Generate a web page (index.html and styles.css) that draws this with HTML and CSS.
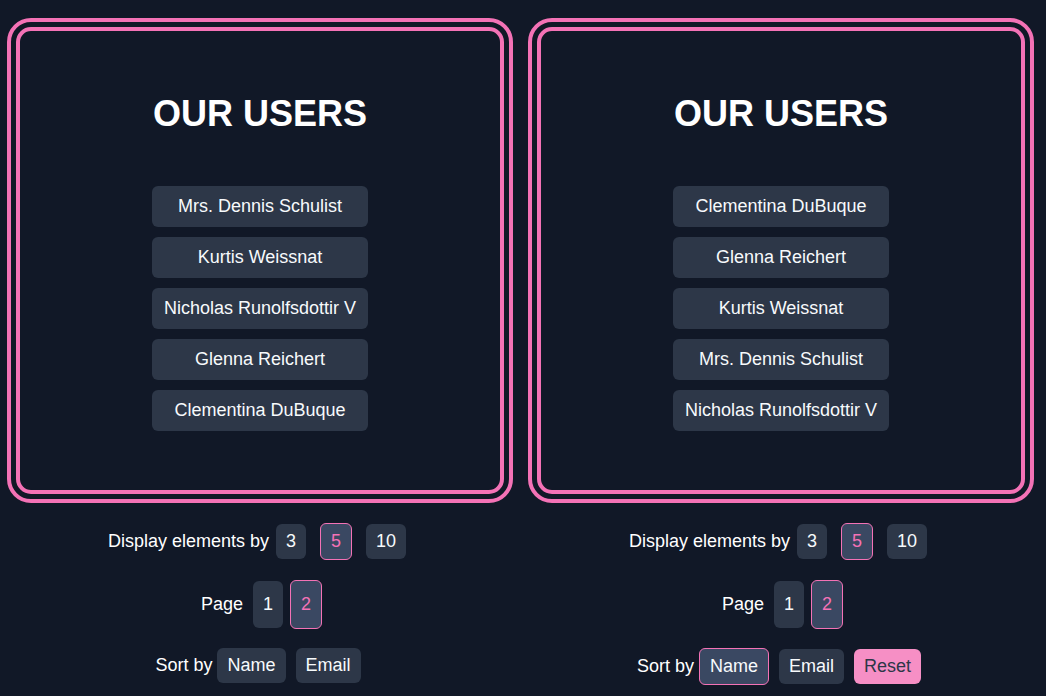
FILE: index.html
```html
<!DOCTYPE html>
<html lang="en">
<head>
<meta charset="utf-8">
<title>Our Users</title>
<link rel="stylesheet" href="styles.css">
</head>
<body>
<main class="app">
  <section class="col">
    <div class="card">
      <h1 class="title">OUR USERS</h1>
      <ul class="users">
        <li class="user">Mrs. Dennis Schulist</li>
        <li class="user">Kurtis Weissnat</li>
        <li class="user">Nicholas Runolfsdottir V</li>
        <li class="user">Glenna Reichert</li>
        <li class="user">Clementina DuBuque</li>
      </ul>
    </div>
    <div class="controls">
      <div class="row row-display">
        <span class="label label-display">Display elements by</span>
        <div class="btns btns-display">
          <button class="btn">3</button>
          <button class="btn active">5</button>
          <button class="btn">10</button>
        </div>
      </div>
      <div class="row row-page">
        <span class="label label-page">Page</span>
        <div class="btns btns-page">
          <button class="btn btn-page">1</button>
          <button class="btn btn-page active">2</button>
        </div>
      </div>
      <div class="row row-sort">
        <span class="label label-sort">Sort by</span>
        <div class="btns btns-sort">
          <button class="btn">Name</button>
          <button class="btn">Email</button>
        </div>
      </div>
    </div>
  </section>
  <section class="col">
    <div class="card">
      <h1 class="title">OUR USERS</h1>
      <ul class="users">
        <li class="user">Clementina DuBuque</li>
        <li class="user">Glenna Reichert</li>
        <li class="user">Kurtis Weissnat</li>
        <li class="user">Mrs. Dennis Schulist</li>
        <li class="user">Nicholas Runolfsdottir V</li>
      </ul>
    </div>
    <div class="controls">
      <div class="row row-display">
        <span class="label label-display">Display elements by</span>
        <div class="btns btns-display">
          <button class="btn">3</button>
          <button class="btn active">5</button>
          <button class="btn">10</button>
        </div>
      </div>
      <div class="row row-page">
        <span class="label label-page">Page</span>
        <div class="btns btns-page">
          <button class="btn btn-page">1</button>
          <button class="btn btn-page active">2</button>
        </div>
      </div>
      <div class="row row-sort">
        <span class="label label-sort">Sort by</span>
        <div class="btns btns-sort">
          <button class="btn active">Name</button>
          <button class="btn">Email</button>
          <button class="btn btn-reset">Reset</button>
        </div>
      </div>
    </div>
  </section>
</main>
</body>
</html>
```

FILE: styles.css
```css
html, body {
  margin: 0;
  padding: 0;
  background: #111827;
}

body {
  font-family: "Liberation Sans", Arial, sans-serif;
  color: #ffffff;
  overflow: hidden;
}

.app {
  display: grid;
  grid-template-columns: 520px 520px;
  column-gap: 1px;
  padding-top: 18px;
}

.col {
  display: flex;
  flex-direction: column;
  align-items: center;
}

.card {
  box-sizing: border-box;
  width: 506px;
  height: 485px;
  border: 13px double #f472b6;
  border-radius: 24px;
  display: flex;
  flex-direction: column;
  align-items: center;
  justify-content: center;
}

.title {
  margin: 4px 0 52px;
  font-size: 36px;
  line-height: 40px;
  font-weight: 700;
  color: #ffffff;
}

.users {
  list-style: none;
  margin: 0;
  padding: 0;
  display: flex;
  flex-direction: column;
  gap: 10px;
}

.user {
  background: #2d3748;
  color: #f7fafc;
  border-radius: 6px;
  padding: 6px 12px 7px;
  font-size: 18px;
  line-height: 28px;
  text-align: center;
}

.controls {
  margin-top: 20px;
  display: flex;
  flex-direction: column;
  align-items: center;
  gap: 20px;
}

.row {
  display: flex;
  align-items: center;
  font-size: 18px;
  line-height: 27px;
}

.btns {
  display: flex;
  align-items: center;
}

.row-display { padding-right: 6px; }
.label-display { margin-right: 7px; }
.btns-display { gap: 14px; }

.row-page { padding-left: 3px; }
.label-page { margin-right: 10px; }
.btns-page { gap: 7px; }

.row-sort { padding-right: 4px; margin-top: -1px; }
.label-sort { margin-right: 5px; }
.btns-sort { gap: 10px; }

.btn {
  font-family: "Liberation Sans", Arial, sans-serif;
  font-size: 18px;
  line-height: 27px;
  padding: 4px 10px;
  border: none;
  border-radius: 6px;
  background: #2d3748;
  color: #f7fafc;
  margin: 0;
}

.btn-page {
  padding-top: 10px;
  padding-bottom: 10px;
}

.btn.active {
  border: 1px solid #f472b6;
  background: #3a4862;
  color: #f472b6;
}

.row-sort .btn.active {
  color: #f7fafc;
}

.btn-reset {
  background: #f68fc5;
  color: #2d3748;
}
```
